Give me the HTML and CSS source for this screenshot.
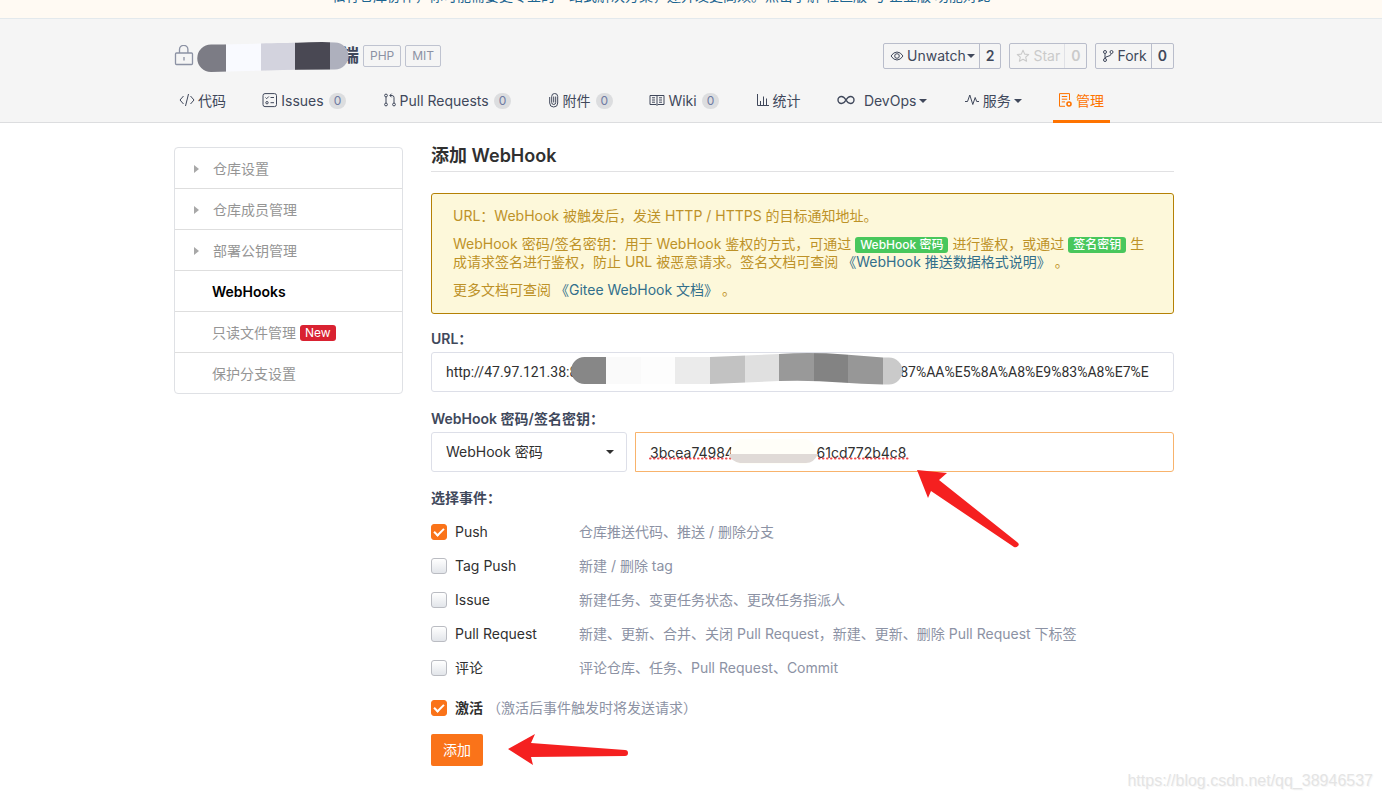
FILE: index.html
```html
<!DOCTYPE html>
<html lang="zh-CN">
<head>
<meta charset="utf-8">
<title>添加 WebHook</title>
<link rel="stylesheet" href="styles.css">
</head>
<body>
<div class="banner"><a class="banner-link" href="#">私有仓库协作，你可能需要更专业的一站式解决方案，还并发更高效。点击了解 社区版 与 企业版 功能对比</a></div>
<header class="project">
  <div class="container">
    <div class="project-top">
      <svg class="lock" viewBox="0 0 20 22" width="20" height="22" fill="none" stroke="#8c92a4" stroke-width="1.3"><rect x="1.5" y="8" width="17" height="11.5" rx="1"/><path d="M5.5 8V4.500a4.200 4.200 0 0 1 8.400 0V8M10 12v3.500"/></svg>
      <h1 class="repo">
        <span class="repo-name">端</span>
        <svg class="repo-mask" viewBox="0 0 152 31" width="152" height="31"><defs><clipPath id="m1"><path d="M14 2.500C50 2 80 1 100 .8Q112 0 125 0L138 .5A13.500 13.500 0 0 1 138 27.500Q100 27.500 70 28.500L14 30A13.700 13.700 0 0 1 14 2.500Z"/></clipPath></defs><g clip-path="url(#m1)"><path fill="#7c7c85" d="M0 0h29v31H0z"/><path fill="#f9faff" d="M29 0h35v31H29z"/><path fill="#d3d3de" d="M64 0h34v31H64z"/><path fill="#494853" d="M98 0h35v31H98z"/><path fill="#aeb0bd" d="M133 0h19v31h-19z"/></g></svg>
      </h1>
      <span class="tag">PHP</span><span class="tag">MIT</span>
      <div class="actions">
        <div class="split"><button type="button" class="act"><svg viewBox="0 0 14 12" width="14" height="12" fill="none" stroke="currentColor" stroke-width="1"><path d="M1 6Q3.500 2 7 2t6 4Q10.500 10 7 10T1 6Z"/><circle cx="7" cy="6" r="2.300"/></svg><span>Unwatch</span><i class="caret"></i></button><a class="num" href="#">2</a></div>
        <div class="split disabled"><button type="button" class="act" disabled><svg viewBox="0 0 14 14" width="14" height="14" fill="none" stroke="currentColor" stroke-width="1.1" stroke-linejoin="round"><path d="M7 1.300l1.700 3.800 4 .4-3 2.700.9 4L7 10.200l-3.600 2 .9-4-3-2.700 4-.4z"/></svg><span>Star</span></button><a class="num" href="#">0</a></div>
        <div class="split"><button type="button" class="act"><svg viewBox="0 0 12 14" width="12" height="14" fill="none" stroke="currentColor" stroke-width="1"><circle cx="3" cy="3" r="1.500"/><circle cx="3" cy="11" r="1.500"/><circle cx="9.500" cy="3" r="1.500"/><path d="M3 4.500v5M9.300 4.500Q9 7 6 7.300 3.300 7.600 3 9.500"/></svg><span>Fork</span></button><a class="num" href="#">0</a></div>
      </div>
    </div>
    <nav class="tabs">
      <a class="tab" href="#"><svg viewBox="0 0 16 16" width="16" height="16" class="ic"><path d="M4.500 3L1 7l3.500 4M11.500 3L15 7l-3.500 4M9.500 1l-3 12"/></svg>代码</a>
      <a class="tab" href="#"><svg viewBox="0 0 16 16" width="16" height="16" class="ic"><rect x="1" y=".6" width="13.500" height="13" rx="2"/><path d="M3.500 4.500l1.200 1.200L6.800 3.500M8.500 4.500H12M8.500 9.700H12"/><circle cx="5" cy="9.700" r="1.200"/></svg>Issues<span class="count">0</span></a>
      <a class="tab" href="#"><svg viewBox="0 0 14 16" width="14" height="16" class="ic"><circle cx="3" cy="2.500" r="1.400"/><circle cx="3" cy="11.500" r="1.400"/><circle cx="11" cy="11.500" r="1.400"/><path d="M3 4v6M11 10V4.500Q11 2.500 9 2.500H7M8.600 .7L6.800 2.500l1.800 1.800"/></svg>Pull Requests<span class="count">0</span></a>
      <a class="tab" href="#"><svg viewBox="0 0 12 16" width="12" height="16" class="ic"><path d="M1.700 4v6a4 4 0 0 0 8 0V3.500a3 3 0 0 0-6 0v6a2 2 0 0 0 4 0V3.500M5.700 3.500v6"/></svg>附件<span class="count">0</span></a>
      <a class="tab" href="#"><svg viewBox="0 0 16 16" width="16" height="16" class="ic"><path d="M1 2.500h14v9H9L8 12.500 7 11.500H1zM8 3v9M3 4.800h3M3 7h3M3 9.200h3M10 4.800h3M10 7h3M10 9.200h3"/></svg>Wiki<span class="count">0</span></a>
      <a class="tab" href="#"><svg viewBox="0 0 14 16" width="14" height="16" class="ic"><path d="M1.500 1v11.500H13M4.500 12V8M7.500 12V3.500M10.500 12V5.500"/></svg>统计</a>
      <a class="tab" href="#"><svg viewBox="0 0 18 16" width="18" height="16" class="ic infinity"><path d="M9 7C7.500 4.500 6.300 3.500 4.500 3.500a3.500 3.500 0 0 0 0 7C6.300 10.500 7.500 9.500 9 7s2.700-3.500 4.500-3.500a3.500 3.500 0 0 1 0 7C11.700 10.500 10.500 9.500 9 7Z"/></svg><span>DevOps</span><i class="caret"></i></a>
      <a class="tab" href="#"><svg viewBox="0 0 16 16" width="16" height="16" class="ic"><path d="M1 8.500h2.500L5.800 2l3 9.500 2.400-7 1.500 4H15" stroke-linejoin="round"/></svg>服务<i class="caret"></i></a>
      <a class="tab active" href="#"><svg viewBox="0 0 15 16" width="15" height="16" class="ic"><path d="M7 13.300H1.500V.6h10V7M3.800 3.500h5.400M3.800 6.200h5.400M3.800 8.900H7"/><circle cx="11" cy="11" r="2" stroke-width="1.600"/></svg>管理</a>
    </nav>
  </div>
</header>
<div class="page">
  <div class="container columns">
    <aside class="side">
      <a class="side-item" href="#"><i class="arrow"></i>仓库设置</a>
      <a class="side-item" href="#"><i class="arrow"></i>仓库成员管理</a>
      <a class="side-item" href="#"><i class="arrow"></i>部署公钥管理</a>
      <a class="side-item plain current" href="#">WebHooks</a>
      <a class="side-item plain" href="#">只读文件管理<span class="new">New</span></a>
      <a class="side-item plain" href="#">保护分支设置</a>
    </aside>
    <main class="content">
      <h2 class="title">添加 WebHook</h2>
      <div class="notice">
        <p>URL：WebHook 被触发后，发送 HTTP / HTTPS 的目标通知地址。</p>
        <p>WebHook 密码/签名密钥：用于 WebHook 鉴权的方式，可通过 <span class="chip">WebHook 密码</span> 进行鉴权，或通过 <span class="chip">签名密钥</span> 生成请求签名进行鉴权，防止 URL 被恶意请求。签名文档可查阅 <a href="#">《WebHook 推送数据格式说明》</a> 。</p>
        <p>更多文档可查阅 <a href="#">《Gitee WebHook 文档》</a> 。</p>
      </div>
      <form class="form">
        <label class="label" for="url">URL：</label>
        <div class="field">
          <input class="box url" id="url" type="text" value="http://47.97.121.38:8&nbsp;&nbsp;&nbsp;&nbsp;&nbsp;&nbsp;&nbsp;&nbsp;&nbsp;&nbsp;&nbsp;&nbsp;&nbsp;&nbsp;&nbsp;&nbsp;&nbsp;&nbsp;&nbsp;&nbsp;&nbsp;&nbsp;&nbsp;&nbsp;&nbsp;&nbsp;&nbsp;&nbsp;&nbsp;&nbsp;&nbsp;&nbsp;&nbsp;&nbsp;&nbsp;&nbsp;&nbsp;&nbsp;&nbsp;&nbsp;&nbsp;&nbsp;&nbsp;&nbsp;&nbsp;&nbsp;&nbsp;&nbsp;&nbsp;&nbsp;&nbsp;&nbsp;&nbsp;&nbsp;&nbsp;&nbsp;&nbsp;&nbsp;&nbsp;&nbsp;&nbsp;&nbsp;&nbsp;&nbsp;&nbsp;&nbsp;&nbsp;&nbsp;&nbsp;&nbsp;&nbsp;&nbsp;&nbsp;&nbsp;&nbsp;&nbsp;&nbsp;&nbsp;&nbsp;&nbsp;&nbsp;&nbsp;&nbsp;&nbsp;&nbsp;&nbsp;&nbsp;&nbsp;&nbsp;&nbsp;&nbsp;&nbsp;&nbsp;87%AA%E5%8A%A8%E9%83%A8%E7%E">
          <svg class="url-mask" viewBox="0 0 332 32" width="332" height="32"><defs><clipPath id="m2"><path d="M13.500 4H139L208 1Q240-1 274 1.500L312 4.500H318A13.500 13.500 0 0 1 318 31.500H312Q290 31 270 29.500 240 27 208 28L139 31H13.500A13.500 13.500 0 0 1 13.500 4Z"/></clipPath></defs><g clip-path="url(#m2)"><path fill="#878787" d="M0 0h35v32H0z"/><path fill="#fafafa" d="M35 0h35v32H35z"/><path fill="#fdfdfd" d="M70 0h34v32H70z"/><path fill="#ebebeb" d="M104 0h35v32h-35z"/><path fill="#c2c2c2" d="M139 0h35v32h-35z"/><path fill="#e0e0e0" d="M174 0h34v32h-34z"/><path fill="#999" d="M208 0h35v32h-35z"/><path fill="#838383" d="M243 0h34v32h-34z"/><path fill="#979797" d="M277 0h35v32h-35z"/><path fill="#cacaca" d="M312 0h20v32h-20z"/></g></svg>
        </div>
        <label class="label" for="secret">WebHook 密码/签名密钥：</label>
        <div class="pair">
          <div class="field">
            <select class="box" aria-label="验证方式"><option>WebHook 密码</option></select>
            <i class="caret select-caret"></i>
          </div>
          <div class="field">
            <input class="box focused" id="secret" type="text" spellcheck="false" value="3bcea74984&nbsp;&nbsp;&nbsp;&nbsp;&nbsp;&nbsp;&nbsp;&nbsp;&nbsp;&nbsp;&nbsp;&nbsp;&nbsp;&nbsp;&nbsp;&nbsp;&nbsp;&nbsp;&nbsp;&nbsp;&nbsp;61cd772b4c8">
            <svg class="secret-mask" viewBox="0 0 260 26" width="260" height="26"><path d="M1 19.500H82M170 19.500H259" stroke="#f0494d" stroke-width="2" stroke-linecap="round" stroke-dasharray="0.500 3.500"/><path d="M91 0h66a13 13 0 0 1 0 25H91a13 13 0 0 1 0-25Z" fill="#fffef8"/><path d="M79 15H169Q165 24 157 24H91Q83 23 79 15Z" fill="#e0dad7"/></svg>
            <svg class="pointer-up" viewBox="0 0 104 80" width="104" height="80"><path fill="#f52020" d="M1 1L31 4 23 11 101 73Q104 75 102 77T98 78L15 22 12 29Z"/></svg>
          </div>
        </div>
        <fieldset class="events">
          <legend class="label">选择事件：</legend>
          <div class="event"><label><input type="checkbox" checked>Push</label><span>仓库推送代码、推送 / 删除分支</span></div>
          <div class="event"><label><input type="checkbox">Tag Push</label><span>新建 / 删除 tag</span></div>
          <div class="event"><label><input type="checkbox">Issue</label><span>新建任务、变更任务状态、更改任务指派人</span></div>
          <div class="event"><label><input type="checkbox">Pull Request</label><span>新建、更新、合并、关闭 Pull Request，新建、更新、删除 Pull Request 下标签</span></div>
          <div class="event"><label><input type="checkbox">评论</label><span>评论仓库、任务、Pull Request、Commit</span></div>
        </fieldset>
        <div class="active-row"><label><input type="checkbox" checked><b>激活</b></label><span>（激活后事件触发时将发送请求）</span></div>
        <div class="submit-row">
          <button class="submit" type="button">添加</button>
          <svg class="pointer-left" viewBox="0 0 122 33" width="122" height="33"><path fill="#f52020" d="M1 16L28 1 24 10 118 17Q121 17 121 20T118 23L24 24 26 32Z"/></svg>
        </div>
      </form>
    </main>
  </div>
</div>
<div class="watermark">https://blog.csdn.net/qq_38946537</div>
</body>
</html>
```
FILE: styles.css
```css
* { box-sizing: border-box; }
body {
  margin: 0;
  background: #fff;
  color: #303030;
  font: 14px/18px Inter, "Noto Sans CJK SC", sans-serif;
}
a { color: inherit; text-decoration: none; }
button, input, select { font: inherit; color: inherit; }
svg { flex: none; }
.banner {
  display: flex;
  align-items: flex-end;
  justify-content: center;
  height: 19px;
  padding: 0 60px 13px 0;
  overflow: hidden;
  background: #fffaf3;
  border-bottom: 1px solid #e3e9ed;
}
.banner-link { flex: none; color: #1c6590; white-space: nowrap; }
.project { padding: 24px 34px 0 0; background: #f5f5f5; border-bottom: 1px solid #dcdddf; }
.container { max-width: 1000px; margin: 0 auto; }
.project-top { display: flex; align-items: center; height: 26px; }
.repo { position: relative; margin: 0 4px 0 3px; padding-left: 144px; font-size: 18px; line-height: 26px; color: #40485b; }
.repo-name { display: block; }
.repo-mask { position: absolute; left: 0; top: -1px; }
.tag {
  height: 22px;
  margin-right: 4px;
  padding: 0 6px;
  border: 1px solid #bfc3d0;
  border-radius: 2px;
  color: #8c92a4;
  font-size: 12px;
  line-height: 20px;
}
.actions { display: flex; gap: 8px; margin-left: auto; }
.split { display: flex; height: 26px; border: 1px solid #b9bdcb; border-radius: 2px; color: #40485b; }
.act { display: flex; align-items: center; gap: 3px; padding: 0 4px 0 6px; border: 0; background: none; }
.num { padding: 0 6px; border-left: 1px solid #b9bdcb; font-weight: 600; line-height: 24px; }
.disabled, .disabled .act { color: #cacaca; }
.disabled .num { border-color: #e0e1e6; }
.caret { flex: none; border: 4px solid transparent; border-top: 4px solid currentColor; border-bottom: 0; }
.act .caret { margin-left: -2px; }
.tabs { display: flex; justify-content: space-between; margin: 10px 64px -1px 0; }
.tab { display: flex; align-items: center; gap: 3px; height: 44px; padding: 3px 6px 0 5px; border-bottom: 3px solid transparent; color: #40485b; }
.tab.active { color: #fe7300; border-color: #fe7300; }
.ic { fill: none; stroke: currentColor; stroke-width: 1; }
.infinity { margin-right: 6px; stroke-width: 1.4; }
.count { margin-left: 2px; padding: 0 5px; border-radius: 8px; background: #dcdddf; color: #6e7aa3; font-size: 12px; line-height: 16px; }
.page { padding: 24px 34px 24px 0; }
.columns { display: grid; grid-template-columns: 229px 1fr; gap: 28px; align-items: start; }
.side { border: 1px solid #dfe1e5; border-radius: 4px; }
.side-item { display: flex; align-items: center; height: 41px; padding: 2px 0 0 19px; color: #959595; border-bottom: 1px solid #dedede; }
.side-item:last-child { height: 40px; border-bottom: 0; }
.side-item.plain { padding-left: 37px; }
.side-item.current { color: #000; font-weight: 600; }
.arrow { margin-right: 14px; border: 4px solid transparent; border-left: 5px solid #a8a8a8; border-right: 0; }
.new { margin-left: 4px; padding: 0 5px; border-radius: 3px; background: #d92231; color: #fff; font-size: 12px; line-height: 16px; }
.title { margin: 0; padding-bottom: 6px; border-bottom: 1px solid #e1e1e3; font-size: 18px; font-weight: 600; line-height: 18px; }
.notice { margin: 21px 0 16px; padding: 13px 20px 14px 21px; border: 1px solid #b58105; border-radius: 3px; background: #fdf8da; color: #bd9228; }
.notice p { margin: 0 0 10px; }
.notice p:last-child { margin: 0; }
.notice a { color: #326f8b; }
.chip { padding: 0 5px; border-radius: 3px; background: #48c75c; color: #fff; font-size: 12px; font-weight: 500; line-height: 16px; display: inline-block; }
.label { display: block; padding: 0; margin-bottom: 4px; color: #40485b; font-weight: 600; }
.field { position: relative; margin-bottom: 18px; }
.box {
  display: block;
  width: 100%;
  height: 40px;
  padding: 0 14px;
  border: 1px solid #dddfe8;
  border-radius: 3px;
  background: #fff;
  outline: 0;
  appearance: none;
}
.box.url { font-family: Roboto, sans-serif; }
.box.focused { border-color: #f8b36c; border-radius: 0 3px 3px 0; }
.url-mask { position: absolute; left: 140px; top: 1px; }
.pair { display: grid; grid-template-columns: 196px 1fr; gap: 8px; }
.pair .field { margin-bottom: 17px; }
.select-caret { position: absolute; right: 13px; top: 18px; }
.secret-mask { position: absolute; left: 14px; top: 7px; pointer-events: none; }
.pointer-up { position: absolute; left: 281px; top: 37px; pointer-events: none; }
.events { margin: 0; padding: 0; border: 0; }
.events .label { margin-bottom: 8px; }
.event { display: grid; grid-template-columns: 148px 1fr; align-items: center; height: 34px; }
.event label, .active-row label { display: flex; align-items: center; gap: 8px; }
.event span, .active-row span { color: #8c92a4; }
input[type="checkbox"] {
  appearance: none;
  width: 16px;
  height: 16px;
  margin: 0;
  border: 1px solid #babcc2;
  border-radius: 3px;
  background: linear-gradient(#fff, #e2e5ea);
}
input[type="checkbox"]:checked { position: relative; border-color: #fa7319; background: #fa7319; }
input[type="checkbox"]:checked::after {
  content: "";
  position: absolute;
  left: 2px;
  top: 3px;
  width: 10px;
  height: 6px;
  box-sizing: border-box;
  border: solid #fff;
  border-width: 0 0 2px 2px;
  transform: rotate(-45deg);
}
.active-row { display: flex; align-items: center; gap: 4px; height: 34px; margin-top: 6px; }
.active-row b { font-weight: 600; }
.submit-row { display: flex; align-items: center; gap: 24px; margin-top: 8px; }
.submit { height: 32px; padding: 0 12px; border: 0; border-radius: 2px; background: #fa7319; color: #fff; }
.watermark { position: absolute; right: 9px; bottom: 8px; color: #e4e4e4; font: 16px/20px "Liberation Sans", sans-serif; text-shadow: 1px 1px #f7f7f7; }
```
